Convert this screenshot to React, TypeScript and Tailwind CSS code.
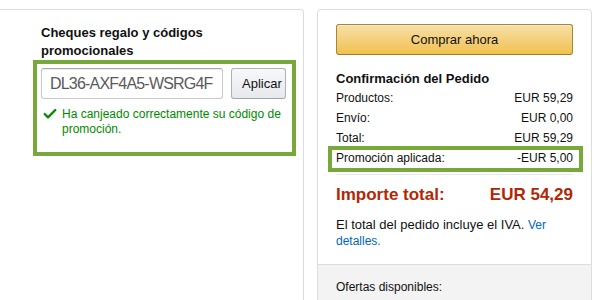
import { Check } from 'lucide-react'

const font = { fontFamily: '"Liberation Sans", Arial, sans-serif' }

const rows = [
  { label: 'Productos:', value: 'EUR 59,29' },
  { label: 'Envío:', value: 'EUR 0,00' },
  { label: 'Total:', value: 'EUR 59,29' },
]

function PromoPanel() {
  return (
    <div className="mt-[9px] h-[320px] w-[304px] shrink-0 rounded-tr-[4px] border-t border-r border-[#dddddd] pt-[14px] pl-[33px]">
      <h3 className="w-[200px] pl-[8px] text-[13px] leading-[18px] font-bold text-[#111111]">
        Cheques regalo y códigos promocionales
      </h3>
      <div className="h-[96px] w-[263px] border-4 border-[#76a83a] px-[4px] pt-[4px]">
        <div className="flex gap-[8px]">
          <input
            readOnly
            value="DL36-AXF4A5-WSRG4F"
            className="h-[31px] w-[182px] rounded-[3px] border border-[#c9c9c9] border-t-[#a6a6a6] pl-[8px] text-[16px] tracking-[-0.8px] text-[#5a5a5a] shadow-[inset_0_1px_0_rgba(0,0,0,0.07)] outline-none"
          />
          <button className="h-[31px] w-[55px] overflow-hidden rounded-[3px] border border-[#adb1b8] border-b-[#a2a6ac] bg-gradient-to-b from-[#f7f8fa] to-[#e7e9ec] pl-[10px] text-left text-[13px] whitespace-nowrap text-[#111111]">
            Aplicar
          </button>
        </div>
        <div className="mt-[8px] flex text-[12px] leading-[15px] text-[#008a00]">
          <Check className="mt-[-1px] ml-[1px] h-[16px] w-[16px] shrink-0" strokeWidth={3.4} />
          <p className="ml-[4px]">Ha canjeado correctamente su código de promoción.</p>
        </div>
      </div>
    </div>
  )
}

function OrderPanel() {
  return (
    <div className="mt-[9px] ml-[13px] h-[320px] w-[275px] shrink-0 overflow-hidden rounded-[4px] border border-[#dddddd]">
      <div className="px-[18px] pt-[14px] pb-[15px]">
        <button className="h-[31px] w-full rounded-[3px] border border-[#a88734] border-b-[#9c7e31] bg-gradient-to-b from-[#f7dfa5] to-[#f0c14b] text-[13px] text-[#111111] shadow-[inset_0_1px_0_rgba(255,255,255,0.4)]">
          Comprar ahora
        </button>
        <h3 className="mt-[14px] text-[13px] leading-[19px] font-bold text-[#111111]">Confirmación del Pedido</h3>
        <div className="text-[12px] leading-[20px] text-[#111111]">
          {rows.map((r) => (
            <div key={r.label} className="flex justify-between">
              <span>{r.label}</span>
              <span>{r.value}</span>
            </div>
          ))}
          <div className="relative flex justify-between">
            <span>Promoción aplicada:</span>
            <span>-EUR 5,00</span>
            <div className="pointer-events-none absolute -top-[2px] -right-[10px] -bottom-[4px] -left-[8px] border-4 border-[#76a83a]" />
          </div>
        </div>
        <div className="mt-[6px] h-px bg-[#e7e7e7]" />
        <div className="mt-[8px] flex justify-between text-[17px] leading-[24px] font-bold text-[#b12704]">
          <span>Importe total:</span>
          <span>EUR 54,29</span>
        </div>
        <p className="mt-[10px] text-[13px] leading-[16px] text-[#111111]">
          <span>El total del pedido incluye el IVA.</span>{' '}
          <a className="text-[12px] text-[#0066c0]">Ver</a>
          <br />
          <a className="text-[12px] text-[#0066c0]">detalles.</a>
        </p>
      </div>
      <div className="h-[60px] border-t border-[#dddddd] bg-[#f3f3f3] px-[18px] pt-[14px] text-[12px] leading-[16px] text-[#111111]">
        Ofertas disponibles:
      </div>
    </div>
  )
}

export default function App() {
  return (
    <div className="flex h-[300px] w-[600px] items-start overflow-hidden bg-white" style={font}>
      <PromoPanel />
      <OrderPanel />
    </div>
  )
}
